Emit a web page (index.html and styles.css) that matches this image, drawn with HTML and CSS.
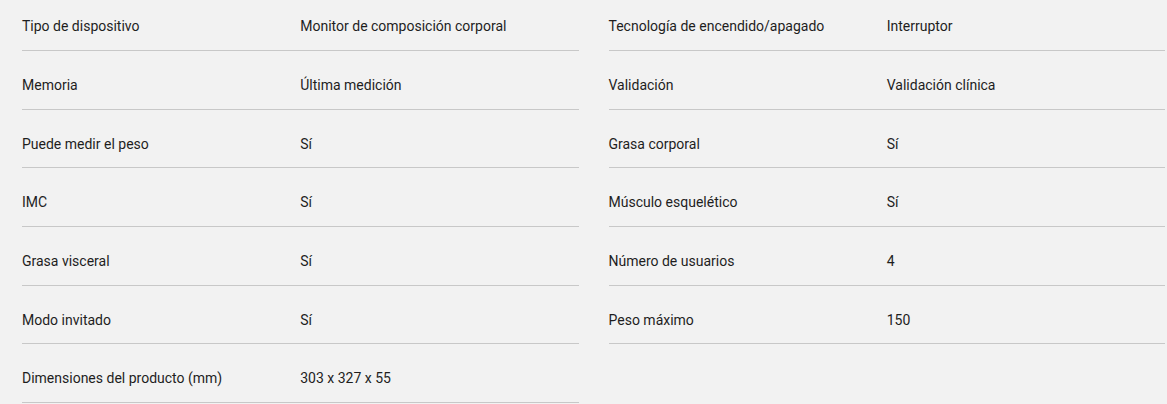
FILE: index.html
```html
<!DOCTYPE html>
<html lang="es">
<head>
<meta charset="utf-8">
<title>Especificaciones</title>
<link rel="stylesheet" href="styles.css">
</head>
<body>
<div class="specs">
  <div class="spec-table">
    <div class="spec-row"><div class="spec-label">Tipo de dispositivo</div><div class="spec-value">Monitor de composición corporal</div></div>
    <div class="spec-row"><div class="spec-label">Memoria</div><div class="spec-value">Última medición</div></div>
    <div class="spec-row"><div class="spec-label">Puede medir el peso</div><div class="spec-value">Sí</div></div>
    <div class="spec-row"><div class="spec-label">IMC</div><div class="spec-value">Sí</div></div>
    <div class="spec-row"><div class="spec-label">Grasa visceral</div><div class="spec-value">Sí</div></div>
    <div class="spec-row"><div class="spec-label">Modo invitado</div><div class="spec-value">Sí</div></div>
    <div class="spec-row"><div class="spec-label">Dimensiones del producto (mm)</div><div class="spec-value">303 x 327 x 55</div></div>
  </div>
  <div class="spec-table">
    <div class="spec-row"><div class="spec-label">Tecnología de encendido/apagado</div><div class="spec-value">Interruptor</div></div>
    <div class="spec-row"><div class="spec-label">Validación</div><div class="spec-value">Validación clínica</div></div>
    <div class="spec-row"><div class="spec-label">Grasa corporal</div><div class="spec-value">Sí</div></div>
    <div class="spec-row"><div class="spec-label">Músculo esquelético</div><div class="spec-value">Sí</div></div>
    <div class="spec-row"><div class="spec-label">Número de usuarios</div><div class="spec-value">4</div></div>
    <div class="spec-row"><div class="spec-label">Peso máximo</div><div class="spec-value">150</div></div>
  </div>
</div>
</body>
</html>
```

FILE: styles.css
```css
html, body {
  margin: 0;
  padding: 0;
  background: #f2f2f2;
}

body {
  font-family: Roboto, "Liberation Sans", sans-serif;
  font-size: 14px;
  color: #1e1e1e;
  overflow: hidden;
}

.specs {
  display: grid;
  grid-template-columns: 1fr 1fr;
  column-gap: 30px;
  align-items: start;
  padding: 0 2px 0 22px;
  margin-top: -7.67px;
}

.spec-row {
  display: grid;
  grid-template-columns: 1fr 1fr;
  padding: 25px 0 14px;
  line-height: 18.67px;
  border-bottom: 1px solid #c8c8c8;
}

.spec-label,
.spec-value {
  white-space: nowrap;
}
```
